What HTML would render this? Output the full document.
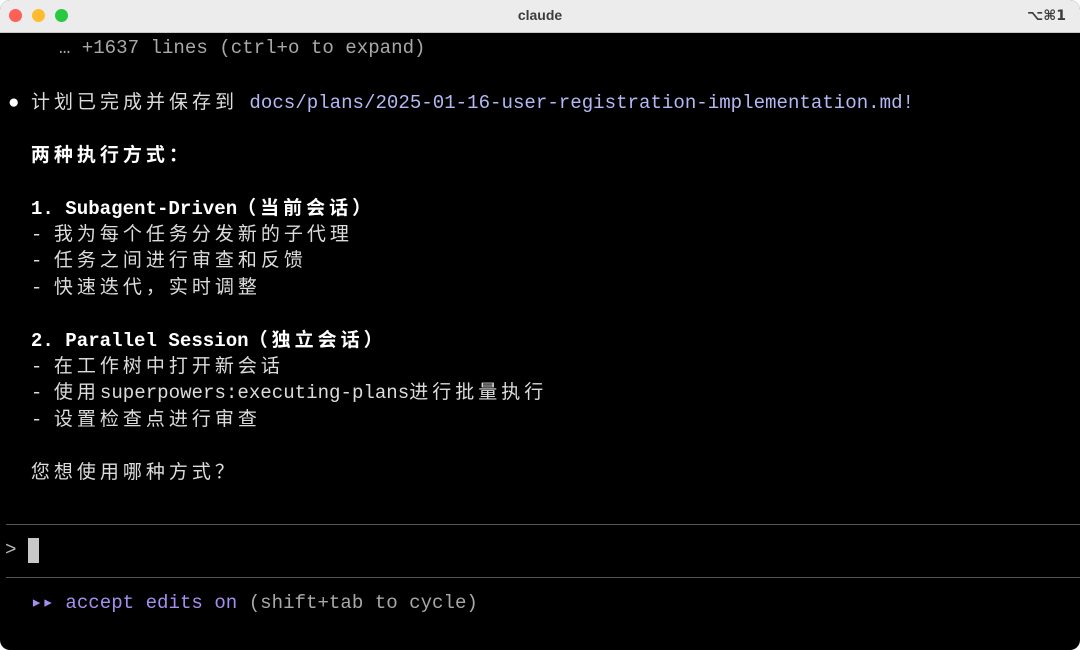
<!DOCTYPE html>
<html><head><meta charset="utf-8"><style>
html,body{margin:0;padding:0;background:#fff;}
.win{position:absolute;left:0;top:0;width:1080px;height:650px;background:#000;border-radius:10px;overflow:hidden;}
.tb{position:absolute;left:0;top:0;width:1080px;height:32px;background:#ececec;border-bottom:1px solid #c8c8c8;}
.dot{position:absolute;top:9px;width:13px;height:13px;border-radius:50%;}
.title{position:absolute;left:0;width:1080px;top:7px;text-align:center;font:bold 14px "Liberation Sans",sans-serif;color:#3c3c3c;}
.kb{position:absolute;right:14px;top:8px;font:bold 14px "DejaVu Sans",sans-serif;color:#3c3c3c;}
.l{position:absolute;left:8px;height:26px;line-height:26px;white-space:pre;font-size:19.1px;font-family:"Liberation Mono","Noto Sans CJK SC",monospace;color:#dcdcdc;}
.c{font-family:"Noto Sans CJK SC",sans-serif;letter-spacing:4px;font-size:19px;}
b{font-weight:bold;color:#fff;}
.g{color:#a8a8a8;}
.p{color:#b4b8f4;}
.v{color:#a68ef0;}
.sep{position:absolute;left:6px;right:0;height:1px;background:#555;}
</style></head><body>
<div class="win">
<div class="tb">
<div class="dot" style="left:9px;background:#fe5f57;"></div>
<div class="dot" style="left:32px;background:#febc2e;"></div>
<div class="dot" style="left:55px;background:#28c840;"></div>
<div class="title">claude</div>
<div class="kb">⌥⌘1</div>
</div>
<div class="l g" style="top:35px;left:13px">    … +1637 lines (ctrl+o to expand)</div>
<div class="l" style="top:88px"><span style="color:#fff">●</span> <span class="c">计划已完成并保存到</span> <span class="p">docs/plans/2025-01-16-user-registration-implementation.md!</span></div>
<div class="l" style="top:141px">  <b class="c">两种执行方式：</b></div>
<div class="l" style="top:194px">  <b>1. Subagent-Driven<span class="c">（当前会话）</span></b></div>
<div class="l" style="top:220px">  - <span class="c">我为每个任务分发新的子代理</span></div>
<div class="l" style="top:246px">  - <span class="c">任务之间进行审查和反馈</span></div>
<div class="l" style="top:273px">  - <span class="c">快速迭代，实时调整</span></div>
<div class="l" style="top:326px">  <b>2. Parallel Session<span class="c">（独立会话）</span></b></div>
<div class="l" style="top:352px">  - <span class="c">在工作树中打开新会话</span></div>
<div class="l" style="top:378px">  - <span class="c">使用</span>superpowers:executing-plans<span class="c">进行批量执行</span></div>
<div class="l" style="top:405px">  - <span class="c">设置检查点进行审查</span></div>
<div class="l" style="top:458px">  <span class="c">您想使用哪种方式？</span></div>
<div class="sep" style="top:524px"></div>
<div class="l" style="top:537px;left:5px;color:#bbb">&gt;</div>
<div style="position:absolute;left:28px;top:538px;width:11px;height:25px;background:#c8c8c8"></div>
<div class="sep" style="top:577px"></div>
<div class="l" style="top:590px">  <span class="v">▸▸ accept edits on</span> <span class="g">(shift+tab to cycle)</span></div>
</div>
</body></html>
